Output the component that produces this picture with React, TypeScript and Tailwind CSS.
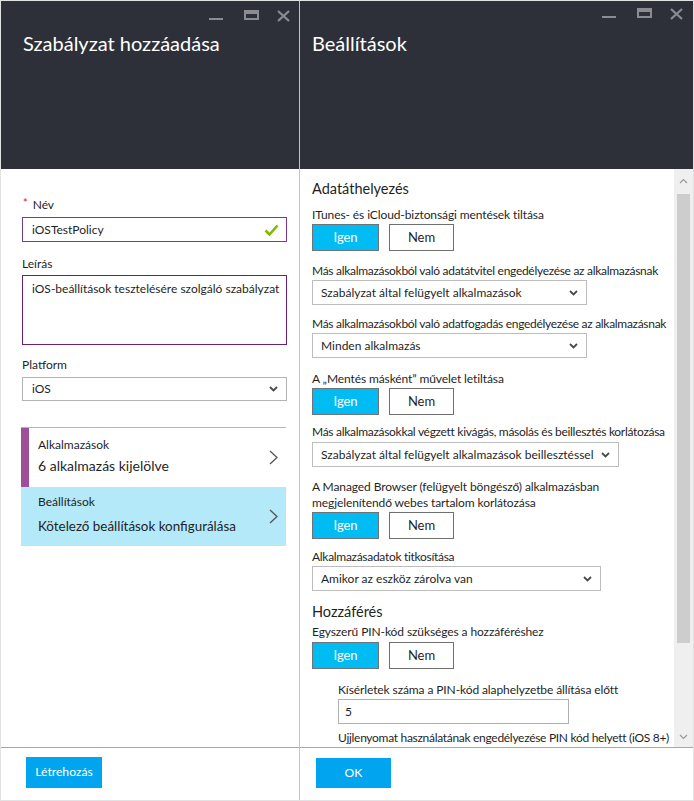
import React from "react";

function WinControls({ variant }: { variant: "left" | "right" }) {
  const wrap =
    variant === "left"
      ? "flex items-start justify-end pr-[9px] pt-[9px] h-[22px]"
      : "flex items-start justify-end pr-[10px] pt-[7px] h-[22px]";
  return (
    <div className={wrap}>
      <svg width="14" height="12" viewBox="0 0 14 12" className="mr-[21px]">
        <rect x="0" y="8" width="14" height="2" fill="#8a8c91" />
      </svg>
      <svg width="15" height="10" viewBox="0 0 15 10" className="mr-[18px]">
        <path d="M0 0H15V10H0Z M2 4H13V8H2Z" fill="#8a8c91" fillRule="evenodd" />
      </svg>
      <svg width="13" height="12" viewBox="0 0 13 12">
        <path d="M1 1L12 11M12 1L1 11" stroke="#8a8c91" strokeWidth="2.3" />
      </svg>
    </div>
  );
}

function ChevronDown() {
  return (
    <svg width="9" height="6" viewBox="0 0 9 6" className="shrink-0">
      <path d="M1 1L4.5 4.5L8 1" stroke="#4a4a4a" strokeWidth="1.8" fill="none" />
    </svg>
  );
}

function ChevronRight() {
  return (
    <svg width="9" height="15" viewBox="0 0 9 15" className="shrink-0">
      <path d="M1 1L8 7.5L1 14" stroke="#555" strokeWidth="1.3" fill="none" />
    </svg>
  );
}

function YesNo() {
  return (
    <div className="flex gap-[10px]">
      <div className="w-[67px] h-[27px] bg-[#00bcf2] border border-[#6f7479] text-white text-[13px] flex items-center justify-center">
        Igen
      </div>
      <div className="w-[65px] h-[27px] bg-white border border-[#6f6f6f] text-[#1f1f1f] text-[13px] flex items-center justify-center">
        Nem
      </div>
    </div>
  );
}

function Select({ text, w }: { text: string; w: string }) {
  return (
    <div className={`${w} h-[25px] border border-[#bdbdbd] flex items-center justify-between pl-[8px] pr-[8px] text-[12px] tracking-normal text-[#1f1f1f] whitespace-nowrap`}>
      <span>{text}</span>
      <ChevronDown />
    </div>
  );
}

export default function App() {
  return (
    <div className="w-[694px] h-[801px] flex border border-[#e2e2e2] bg-white text-[#1f1f1f] font-['Lato',sans-serif] overflow-hidden">
      {/* Left panel */}
      <div className="w-[299px] shrink-0 flex flex-col border-r border-[#c3c3c3]">
        <div className="h-[168px] shrink-0 bg-[#2d3039]">
          <WinControls variant="left" />
          <div className="pl-[22px] pt-[6px] text-[20px] leading-[28px] text-white">Szabályzat hozzáadása</div>
        </div>
        <div className="flex-1 pl-[21px] pt-[27px]">
          <div className="w-[265px]">
            <div className="h-[18px] leading-[18px] text-[12px] flex">
              <span className="text-[#e81123] text-[11px] leading-[14px] ml-[1px] mr-[5px]">*</span>
              <span>Név</span>
            </div>
            <div className="mt-[3px] h-[25px] border border-[#7c3a8f] flex items-center justify-between pl-[9px] pr-[7px] text-[12px]">
              <span>iOSTestPolicy</span>
              <svg width="15" height="12" viewBox="0 0 15 12">
                <path d="M1.5 6.5L5.5 10.5L13.5 1.5" stroke="#7fba00" strokeWidth="2.6" fill="none" />
              </svg>
            </div>
            <div className="mt-[13px] h-[18px] leading-[18px] text-[12px]">Leírás</div>
            <div className="mt-[2px] h-[70px] border border-[#68217a] pl-[9px] pt-[4px] text-[12px] leading-[18px] whitespace-nowrap overflow-hidden">
              iOS-beállítások tesztelésére szolgáló szabályzat
            </div>
            <div className="mt-[11px] h-[18px] leading-[18px] text-[12px]">Platform</div>
            <div className="mt-[3px] h-[24px] border border-[#b3b3b3] flex items-center justify-between pl-[9px] pr-[8px] text-[12px]">
              <span>iOS</span>
              <ChevronDown />
            </div>
            <div className="mt-[26px] -ml-[1px] w-[265px]">
              <div className="h-[60px] border-t border-[#b5b5b5] flex">
                <div className="w-[8px] bg-[#9e4f98]" />
                <div className="flex-1 pl-[9px] pt-[9px]">
                  <div className="text-[12px] leading-[16px]">Alkalmazások</div>
                  <div className="mt-[3px] text-[14px] leading-[20px]">6 alkalmazás kijelölve</div>
                </div>
                <div className="flex items-center pr-[8px]">
                  <ChevronRight />
                </div>
              </div>
              <div className="h-[59px] bg-[#b3e9f8] flex">
                <div className="flex-1 pl-[17px] pt-[7px]">
                  <div className="text-[12px] leading-[16px]">Beállítások</div>
                  <div className="mt-[6px] text-[13.4px] leading-[20px]">Kötelező beállítások konfigurálása</div>
                </div>
                <div className="flex items-center pr-[8px]">
                  <ChevronRight />
                </div>
              </div>
            </div>
          </div>
        </div>
        <div className="h-[53px] shrink-0 border-t border-[#a8a8a8] pl-[25px] pt-[9px]">
          <div className="w-[76px] h-[31px] bg-[#00a4ef] text-white text-[12.2px] flex items-center justify-center">
            Létrehozás
          </div>
        </div>
      </div>

      {/* Right panel */}
      <div className="flex-1 min-w-0 flex flex-col">
        <div className="h-[168px] shrink-0 bg-[#2d3039]">
          <WinControls variant="right" />
          <div className="pl-[12px] pt-[6px] text-[20px] leading-[28px] text-white">Beállítások</div>
        </div>
        <div className="flex-1 min-h-0 flex overflow-hidden">
          <div className="flex-1 min-w-0 pl-[12px] pt-[10px] overflow-hidden text-[12px] tracking-[-0.1px]">
            <div className="text-[14.5px] leading-[20px] tracking-normal">Adatáthelyezés</div>
            <div className="mt-[7px] leading-[18px]">ITunes- és iCloud-biztonsági mentések tiltása</div>
            <YesNo />
            <div className="mt-[11px] leading-[18px] whitespace-nowrap tracking-[-0.3px]">Más alkalmazásokból való adatátvitel engedélyezése az alkalmazásnak</div>
            <Select text="Szabályzat által felügyelt alkalmazások" w="w-[275px]" />
            <div className="mt-[10px] leading-[18px] whitespace-nowrap tracking-[-0.3px]">Más alkalmazásokból való adatfogadás engedélyezése az alkalmazásnak</div>
            <Select text="Minden alkalmazás" w="w-[275px]" />
            <div className="mt-[12px] leading-[18px]">A „Mentés másként” művelet letiltása</div>
            <YesNo />
            <div className="mt-[8px] leading-[18px] whitespace-nowrap tracking-[-0.3px]">Más alkalmazásokkal végzett kivágás, másolás és beillesztés korlátozása</div>
            <div className="mt-[1px]"><Select text="Szabályzat által felügyelt alkalmazások beillesztéssel" w="w-[307px]" /></div>
            <div className="mt-[12px] leading-[16px] whitespace-nowrap">
              <div>A Managed Browser (felügyelt böngésző) alkalmazásban</div>
              <div>megjelenítendő webes tartalom korlátozása</div>
            </div>
            <div className="mt-[1px]"><YesNo /></div>
            <div className="mt-[9px] leading-[18px] tracking-[-0.3px]">Alkalmazásadatok titkosítása</div>
            <Select text="Amikor az eszköz zárolva van" w="w-[289px]" />
            <div className="mt-[11px] text-[14.5px] leading-[20px] tracking-normal">Hozzáférés</div>
            <div className="mt-[1px] leading-[18px]">Egyszerű PIN-kód szükséges a hozzáféréshez</div>
            <div className="mt-[1px]"><YesNo /></div>
            <div className="pl-[26px]">
              <div className="mt-[12px] leading-[18px] whitespace-nowrap">Kísérletek száma a PIN-kód alaphelyzetbe állítása előtt</div>
              <div className="w-[231px] h-[25px] border border-[#b0b0b0] flex items-center pl-[6px] text-[12px]">5</div>
              <div className="mt-[5px] leading-[18px] whitespace-nowrap tracking-[-0.3px]">Ujjlenyomat használatának engedélyezése PIN kód helyett (iOS 8+)</div>
            </div>
          </div>
          <div className="w-[19px] shrink-0 bg-[#efefef] flex flex-col items-center">
            <svg width="9" height="6" viewBox="0 0 9 6" className="mt-[9px]">
              <path d="M1 5L4.5 1.5L8 5" stroke="#9a9a9a" strokeWidth="1.2" fill="none" />
            </svg>
            <div className="mt-[10px] w-[13px] h-[449px] bg-[#cdcdcd]" />
            <div className="flex-1" />
            <svg width="9" height="6" viewBox="0 0 9 6" className="mb-[7px]">
              <path d="M1 1L4.5 4.5L8 1" stroke="#9a9a9a" strokeWidth="1.2" fill="none" />
            </svg>
          </div>
        </div>
        <div className="h-[53px] shrink-0 border-t border-[#a8a8a8] pl-[16px] pt-[10px]">
          <div className="w-[75px] h-[30px] bg-[#00a4ef] text-white text-[12.2px] flex items-center justify-center">
            OK
          </div>
        </div>
      </div>
    </div>
  );
}
